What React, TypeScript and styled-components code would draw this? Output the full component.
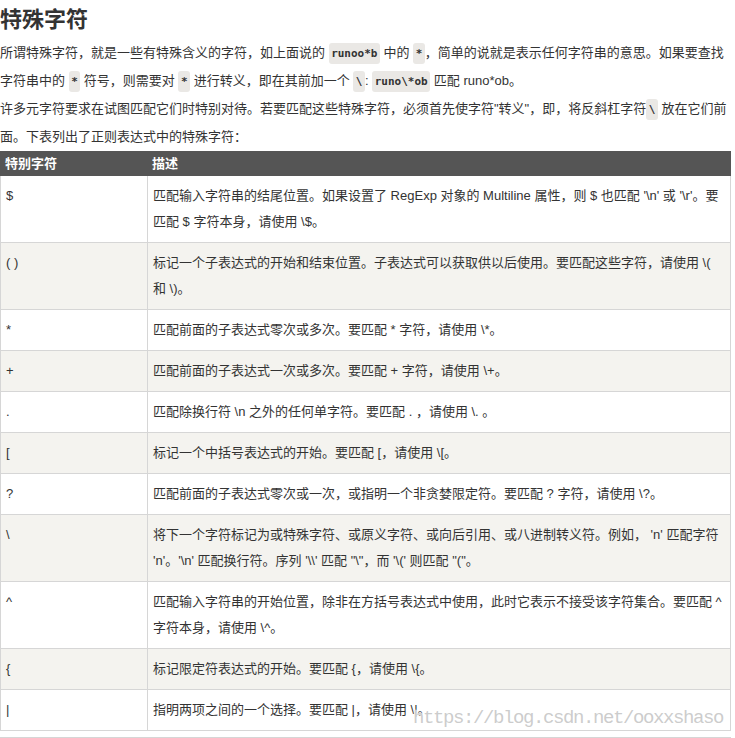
import React from "react";
import styled, { createGlobalStyle } from "styled-components";

const GlobalStyle = createGlobalStyle`
  html, body {
    margin: 0;
    padding: 0;
    background: #ffffff;
  }
  body {
    font-family: "Liberation Sans", "Noto Sans CJK SC", sans-serif;
    color: #333333;
  }
`;

const Page = styled.div`
  position: relative;
  width: 735px;
  height: 738px;
  overflow: hidden;
`;

const Title = styled.h2`
  margin: 0;
  font-size: 22px;
  line-height: 39px;
  font-weight: bold;
  color: #333333;
`;

const Para = styled.p`
  margin: 0;
  width: 731px;
  font-size: 13px;
  line-height: 27px;
`;

const Code = styled.code`
  font-family: "DejaVu Sans Mono", monospace;
  font-weight: bold;
  font-size: 11px;
  background: #eae8e5;
  border-radius: 3px;
  padding: 4px 2.5px;
  color: #333333;
`;

const Table = styled.table`
  margin-top: 1px;
  width: 731px;
  border-collapse: collapse;
  font-size: 13px;
  table-layout: fixed;
`;

const HeadCell = styled.th<{ $w?: number }>`
  box-sizing: border-box;
  background: #555555;
  color: #ffffff;
  font-weight: bold;
  text-align: left;
  padding: 0 4px;
  line-height: 23px;
  border: 1px solid #555555;
  width: ${(p) => (p.$w ? `${p.$w}px` : "auto")};
`;

const Row = styled.tr<{ $alt: boolean }>`
  background: ${(p) => (p.$alt ? "#f4f3ef" : "#ffffff")};
`;

const Cell = styled.td`
  border: 1px solid #d6d6d6;
  padding: 7px 5px;
  line-height: 26px;
  vertical-align: top;
  color: #333333;
`;

const Rule = styled.div`
  margin-top: 6px;
  width: 731px;
  border-top: 1px solid #d6d6d6;
`;

const Watermark = styled.div`
  position: absolute;
  left: 413px;
  top: 705px;
  font-family: "Liberation Mono", monospace;
  font-size: 19px;
  letter-spacing: -1.4px;
  line-height: 26px;
  color: rgba(195, 195, 195, 0.85);
  text-shadow: 0 0 1px #ffffff, 0 0 2px #ffffff;
  white-space: nowrap;
  pointer-events: none;
`;

const rows: [string, string][] = [
  ["$", "匹配输入字符串的结尾位置。如果设置了 RegExp 对象的 Multiline 属性，则 $ 也匹配 '\\n' 或 '\\r'。要匹配 $ 字符本身，请使用 \\$。"],
  ["( )", "标记一个子表达式的开始和结束位置。子表达式可以获取供以后使用。要匹配这些字符，请使用 \\( 和 \\)。"],
  ["*", "匹配前面的子表达式零次或多次。要匹配 * 字符，请使用 \\*。"],
  ["+", "匹配前面的子表达式一次或多次。要匹配 + 字符，请使用 \\+。"],
  [".", "匹配除换行符 \\n 之外的任何单字符。要匹配 . ，请使用 \\. 。"],
  ["[", "标记一个中括号表达式的开始。要匹配 [，请使用 \\[。"],
  ["?", "匹配前面的子表达式零次或一次，或指明一个非贪婪限定符。要匹配 ? 字符，请使用 \\?。"],
  ["\\", "将下一个字符标记为或特殊字符、或原义字符、或向后引用、或八进制转义符。例如， 'n' 匹配字符 'n'。'\\n' 匹配换行符。序列 '\\\\' 匹配 \"\\\"，而 '\\(' 则匹配 \"(\"。"],
  ["^", "匹配输入字符串的开始位置，除非在方括号表达式中使用，此时它表示不接受该字符集合。要匹配 ^ 字符本身，请使用 \\^。"],
  ["{", "标记限定符表达式的开始。要匹配 {，请使用 \\{。"],
  ["|", "指明两项之间的一个选择。要匹配 |，请使用 \\|。"],
];

export default function App() {
  return (
    <Page>
      <GlobalStyle />
      <Title>特殊字符</Title>
      <Para>
        所谓特殊字符，就是一些有特殊含义的字符，如上面说的 <Code>runoo*b</Code> 中的 <Code>*</Code>，简单的说就是表示任何字符串的意思。如果要查找字符串中的 <Code>*</Code> 符号，则需要对 <Code>*</Code> 进行转义，即在其前加一个 <Code>\</Code>: <Code>runo\*ob</Code> 匹配 runo*ob。
      </Para>
      <Para>
        许多元字符要求在试图匹配它们时特别对待。若要匹配这些特殊字符，必须首先使字符"转义"，即，将反斜杠字符<Code>\</Code> 放在它们前面。下表列出了正则表达式中的特殊字符：
      </Para>
      <Table>
        <thead>
          <tr>
            <HeadCell $w={147}>特别字符</HeadCell>
            <HeadCell>描述</HeadCell>
          </tr>
        </thead>
        <tbody>
          {rows.map(([ch, desc], i) => (
            <Row key={i} $alt={i % 2 === 1}>
              <Cell>{ch}</Cell>
              <Cell>{desc}</Cell>
            </Row>
          ))}
        </tbody>
      </Table>
      <Rule />
      <Watermark>https://blog.csdn.net/ooxxshaso</Watermark>
    </Page>
  );
}
